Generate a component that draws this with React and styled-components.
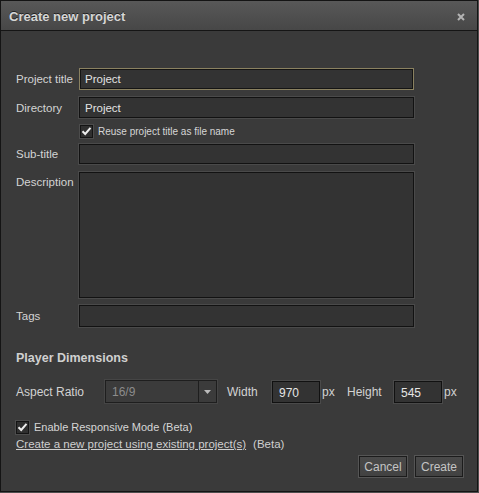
import React from "react";
import styled, { createGlobalStyle } from "styled-components";

const GlobalStyle = createGlobalStyle`
  html, body {
    margin: 0;
    padding: 0;
    background: #4e4e4e;
  }
  body {
    font-family: "Liberation Sans", Arial, sans-serif;
  }
`;

const Dialog = styled.div`
  width: 478px;
  height: 492px;
  box-sizing: border-box;
  border: 1px solid #141414;
  background: #3a3a3a;
  display: flex;
  flex-direction: column;
`;

const TitleBar = styled.div`
  height: 30px;
  box-sizing: border-box;
  border-bottom: 1px solid #151515;
  background: linear-gradient(#585858, #474747);
  display: flex;
  align-items: center;
  justify-content: space-between;
  padding: 0 12px 0 8px;
`;

const Title = styled.div`
  font-size: 13px;
  font-weight: 700;
  color: #d6d6d6;
  text-shadow: 0 -1px 0 #222;
  margin-top: 1px;
`;

const Close = styled.div`
  display: flex;
  align-items: center;
  margin-top: 2px;
`;

const Body = styled.div`
  flex: 1;
  padding: 37px 14px 0 15px;
  display: flex;
  flex-direction: column;
`;

const Row = styled.div`
  display: grid;
  grid-template-columns: 63px 335px;
  align-items: ${(p) => (p.$top ? "start" : "center")};
  margin-top: ${(p) => p.$mt || 0}px;
`;

const Label = styled.div`
  font-size: 11.5px;
  color: #d4d4d4;
  padding-top: ${(p) => (p.$top ? 4 : 0)}px;
`;

const TextInput = styled.div`
  height: ${(p) => p.$h || 21}px;
  box-sizing: border-box;
  background: #333333;
  border: 1px solid ${(p) => (p.$focus ? "#8a8160" : "#121212")};
  box-shadow: ${(p) =>
    p.$focus
      ? "inset 0 0 0 1px #141414"
      : "0 0 0 1px #4a4a4a"};
  padding: 0 5px;
  font-size: 11.5px;
  color: #e2e2e2;
  display: flex;
  align-items: ${(p) => (p.$area ? "flex-start" : "center")};
`;

const CheckRow = styled.label`
  display: flex;
  align-items: center;
  gap: 5px;
  margin-top: ${(p) => p.$mt || 0}px;
  margin-left: ${(p) => p.$indent || 0}px;
  font-size: ${(p) => p.$size || 10}px;
  color: #d6d6d6;
  height: 14px;
`;

const Box = styled.span`
  width: 13px;
  height: 13px;
  box-sizing: border-box;
  background: #2f2f2f;
  border: 1px solid #141414;
  box-shadow: 0 0 0 1px #4c4c4c;
  display: flex;
  align-items: center;
  justify-content: center;
`;

const Heading = styled.div`
  font-size: 12.5px;
  font-weight: 700;
  color: #d0d0d0;
  line-height: 16px;
  margin-top: 23px;
`;

const DimRow = styled.div`
  display: flex;
  align-items: center;
  margin-top: 14px;
  height: 23px;
  font-size: 12px;
  color: #d2d2d2;
`;

const DimLabel = styled.span`
  width: ${(p) => p.$w}px;
  flex: none;
`;

const Select = styled.div`
  width: 112px;
  height: 23px;
  box-sizing: border-box;
  background: #3b3b3b;
  border: 1px solid #1e1e1e;
  box-shadow: 0 0 0 1px #454545;
  display: flex;
  margin-right: 10px;
  flex: none;
`;

const SelectValue = styled.span`
  flex: 1;
  padding-left: 6px;
  display: flex;
  align-items: center;
  color: #8c8c8c;
  font-size: 12px;
`;

const SelectArrow = styled.span`
  width: 17px;
  border-left: 1px solid #1e1e1e;
  display: flex;
  align-items: center;
  justify-content: center;
`;

const NumInput = styled.div`
  width: 48px;
  height: 22px;
  box-sizing: border-box;
  background: #333333;
  border: 1px solid #111;
  box-shadow: 0 0 0 1px #4a4a4a;
  padding: 2px 0 0 6px;
  display: flex;
  align-items: center;
  color: #e6e6e6;
  font-size: 12px;
  margin-right: 2px;
  flex: none;
`;

const LinkLine = styled.div`
  margin-top: 3px;
  font-size: 11.5px;
  color: #cfcfcf;
  line-height: 14px;
`;

const Link = styled.a`
  color: #cfcfcf;
  text-decoration: underline;
  margin-right: 7px;
`;

const Actions = styled.div`
  display: flex;
  justify-content: flex-end;
  gap: 8px;
  margin-top: 5px;
`;

const Button = styled.button`
  width: 48px;
  height: 21px;
  box-sizing: border-box;
  background: linear-gradient(#494949, #424242);
  border: 1px solid #1c1c1c;
  box-shadow: 0 0 0 1px #555;
  color: #c4c4c4;
  font-family: "Liberation Sans", Arial, sans-serif;
  font-size: 12px;
  padding: 0;
`;

const Check = () => (
  <svg width="11" height="10" viewBox="0 0 11 10">
    <path d="M1.5 5.2 L4.2 8 L9.5 1.8" fill="none" stroke="#eeeeee" strokeWidth="2" />
  </svg>
);

export default function App() {
  return (
    <>
      <GlobalStyle />
      <Dialog>
        <TitleBar>
          <Title>Create new project</Title>
          <Close>
            <svg width="8" height="8" viewBox="0 0 8 8">
              <path d="M1 1 L7 7 M7 1 L1 7" stroke="#b4b4b4" strokeWidth="2" />
            </svg>
          </Close>
        </TitleBar>
        <Body>
          <Row>
            <Label>Project title</Label>
            <TextInput $h={22} $focus>Project</TextInput>
          </Row>
          <Row $mt={7}>
            <Label>Directory</Label>
            <TextInput>Project</TextInput>
          </Row>
          <CheckRow $mt={6} $indent={64}>
            <Box>
              <Check />
            </Box>
            Reuse project title as file name
          </CheckRow>
          <Row $mt={6}>
            <Label>Sub-title</Label>
            <TextInput $h={20} />
          </Row>
          <Row $mt={8} $top>
            <Label $top>Description</Label>
            <TextInput $h={126} $area />
          </Row>
          <Row $mt={7}>
            <Label>Tags</Label>
            <TextInput $h={22} />
          </Row>
          <Heading>Player Dimensions</Heading>
          <DimRow>
            <DimLabel $w={89}>Aspect Ratio</DimLabel>
            <Select>
              <SelectValue>16/9</SelectValue>
              <SelectArrow>
                <svg width="7" height="4" viewBox="0 0 7 4">
                  <path d="M0 0 L7 0 L3.5 4 Z" fill="#bbbbbb" />
                </svg>
              </SelectArrow>
            </Select>
            <DimLabel $w={45}>Width</DimLabel>
            <NumInput>970</NumInput>
            <DimLabel $w={25}>px</DimLabel>
            <DimLabel $w={47}>Height</DimLabel>
            <NumInput>545</NumInput>
            <DimLabel $w={16}>px</DimLabel>
          </DimRow>
          <CheckRow $mt={17} $size={11}>
            <Box>
              <Check />
            </Box>
            Enable Responsive Mode (Beta)
          </CheckRow>
          <LinkLine>
            <Link>Create a new project using existing project(s)</Link>
            (Beta)
          </LinkLine>
          <Actions>
            <Button>Cancel</Button>
            <Button>Create</Button>
          </Actions>
        </Body>
      </Dialog>
    </>
  );
}
